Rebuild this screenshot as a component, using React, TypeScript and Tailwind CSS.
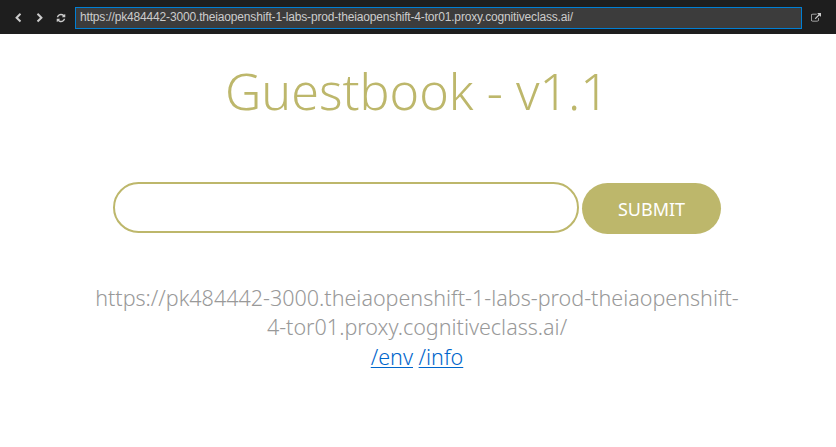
import type { ReactNode } from "react";

function Icon({ d, className = "" }: { d: string; className?: string }) {
  return (
    <svg width={10} height={10} viewBox="0 0 1792 1792" fill="currentColor" className={`shrink-0 ${className}`}>
      <path d={d} />
    </svg>
  );
}

const LEFT =
  "M1427 301l-531 531 531 531q19 19 19 45t-19 45l-166 166q-19 19-45 19t-45-19l-742-742q-19-19-19-45t19-45l742-742q19-19 45-19t45 19l166 166q19 19 19 45t-19 45z";
const RIGHT =
  "M1363 877l-742 742q-19 19-45 19t-45-19l-166-166q-19-19-19-45t19-45l531-531-531-531q-19-19-19-45t19-45l166-166q19-19 45-19t45 19l742 742q19 19 19 45t-19 45z";
const REFRESH =
  "M1639 1056q0 5-1 7-64 268-268 434.5t-478 166.5q-146 0-282.5-55t-243.5-157l-129 129q-19 19-45 19t-45-19-19-45v-448q0-26 19-45t45-19h448q26 0 45 19t19 45-19 45l-137 137q71 66 161 102t187 36q134 0 250-65t186-179q11-17 53-117 8-23 30-23h192q13 0 22.5 9.5t9.5 22.5zm25-800v448q0 26-19 45t-45 19h-448q-26 0-45-19t-19-45 19-45l138-138q-148-137-349-137-134 0-250 65t-186 179q-11 17-53 117-8 23-30 23h-199q-13 0-22.5-9.5t-9.5-22.5v-7q65-268 270-434.5t480-166.5q146 0 284 55.5t245 156.5l130-129q19-19 45-19t45 19 19 45z";
const EXTERNAL =
  "M1408 928v320q0 119-84.5 203.5t-203.5 84.5h-832q-119 0-203.5-84.5t-84.5-203.5v-832q0-119 84.5-203.5t203.5-84.5h704q14 0 23 9t9 23v64q0 14-9 23t-23 9h-704q-66 0-113 47t-47 113v832q0 66 47 113t113 47h832q66 0 113-47t47-113v-320q0-14 9-23t23-9h64q14 0 23 9t9 23zm384-864v512q0 26-19 45t-45 19-45-19l-176-176-652 652q-10 10-23 10t-23-10l-114-114q-10-10-10-23t10-23l652-652-176-176q-19-19-19-45t19-45 45-19h512q26 0 45 19t19 45z";

const URL = "https://pk484442-3000.theiaopenshift-1-labs-prod-theiaopenshift-4-tor01.proxy.cognitiveclass.ai/";

function PageLink({ children }: { children: ReactNode }) {
  return (
    <a href="#" className="text-[#0066cc] underline decoration-1 underline-offset-2">
      {children}
    </a>
  );
}

export default function App() {
  return (
    <div className="flex h-[447px] flex-col overflow-hidden bg-white font-['Noto_Sans',sans-serif] font-light">
      <header className="flex h-[34px] shrink-0 items-center bg-[#1e1e1e] pt-0.5 pl-[13px] text-[#cccccc]">
        <Icon d={LEFT} />
        <Icon d={RIGHT} className="ml-3" />
        <Icon d={REFRESH} className="ml-[11px]" />
        <input
          defaultValue={URL}
          className="ml-[9px] h-[22px] w-[727px] border border-[#007fd4] bg-[#3c3c3c] px-1 pb-[3px] font-['Liberation_Sans',Arial,sans-serif] text-[12px] font-normal tracking-[-0.165px] outline-none"
        />
        <Icon d={EXTERNAL} className="ml-[9px]" />
      </header>
      <main className="flex flex-col items-center pr-0.5">
        <h1 className="mt-[21px] h-[72px] text-[50.2px] leading-[72px] text-[#bdb76b]">Guestbook - v1.1</h1>
        <form className="mt-[55px] flex gap-[3px]">
          <input className="h-[51px] w-[466px] rounded-full border-2 border-[#bdb76b] px-6 outline-none" />
          <button type="button" className="mt-px h-[51px] w-[139px] rounded-full bg-[#bdb76b] pt-0.5 text-[18px] font-normal text-white">
            SUBMIT
          </button>
        </form>
        <div className="mt-[49px] w-[660px] text-center text-[21.52px] leading-[29.4px] text-[#999999]">
          <p>{URL}</p>
          <p className="leading-[30px]">
            <PageLink>/env</PageLink> <PageLink>/info</PageLink>
          </p>
        </div>
      </main>
    </div>
  );
}
